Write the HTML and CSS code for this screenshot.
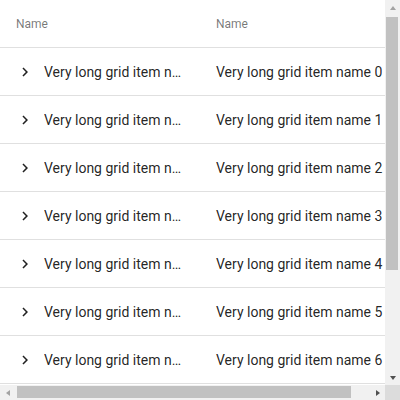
FILE: index.html
```html
<!DOCTYPE html>
<html>
<head>
<meta charset="utf-8">
<link rel="stylesheet" href="styles.css">
</head>
<body>
<div class="frame">
  <div class="viewport">
    <div class="grid">
      <div class="row header">
        <div class="cell">Name</div>
        <div class="cell">Name</div>
      </div>
      <div class="row"><div class="cell first"><svg class="chev" viewBox="0 0 24 24"><path d="M10 6L8.59 7.41 13.17 12l-4.58 4.59L10 18l6-6z"/></svg><span class="txt">Very long grid item name 0</span></div><div class="cell">Very long grid item name 0</div></div>
      <div class="row"><div class="cell first"><svg class="chev" viewBox="0 0 24 24"><path d="M10 6L8.59 7.41 13.17 12l-4.58 4.59L10 18l6-6z"/></svg><span class="txt">Very long grid item name 1</span></div><div class="cell">Very long grid item name 1</div></div>
      <div class="row"><div class="cell first"><svg class="chev" viewBox="0 0 24 24"><path d="M10 6L8.59 7.41 13.17 12l-4.58 4.59L10 18l6-6z"/></svg><span class="txt">Very long grid item name 2</span></div><div class="cell">Very long grid item name 2</div></div>
      <div class="row"><div class="cell first"><svg class="chev" viewBox="0 0 24 24"><path d="M10 6L8.59 7.41 13.17 12l-4.58 4.59L10 18l6-6z"/></svg><span class="txt">Very long grid item name 3</span></div><div class="cell">Very long grid item name 3</div></div>
      <div class="row"><div class="cell first"><svg class="chev" viewBox="0 0 24 24"><path d="M10 6L8.59 7.41 13.17 12l-4.58 4.59L10 18l6-6z"/></svg><span class="txt">Very long grid item name 4</span></div><div class="cell">Very long grid item name 4</div></div>
      <div class="row"><div class="cell first"><svg class="chev" viewBox="0 0 24 24"><path d="M10 6L8.59 7.41 13.17 12l-4.58 4.59L10 18l6-6z"/></svg><span class="txt">Very long grid item name 5</span></div><div class="cell">Very long grid item name 5</div></div>
      <div class="row"><div class="cell first"><svg class="chev" viewBox="0 0 24 24"><path d="M10 6L8.59 7.41 13.17 12l-4.58 4.59L10 18l6-6z"/></svg><span class="txt">Very long grid item name 6</span></div><div class="cell">Very long grid item name 6</div></div>
      <div class="row"><div class="cell first"><svg class="chev" viewBox="0 0 24 24"><path d="M10 6L8.59 7.41 13.17 12l-4.58 4.59L10 18l6-6z"/></svg><span class="txt">Very long grid item name 7</span></div><div class="cell">Very long grid item name 7</div></div>
    </div>
  </div>
  <div class="vbar">
    <div class="btn"><span class="tri up"></span></div>
    <div class="vtrack"><div class="vthumb"></div></div>
    <div class="btn"><span class="tri down"></span></div>
  </div>
  <div class="hbar">
    <div class="btn"><span class="tri left"></span></div>
    <div class="htrack"><div class="hthumb"></div></div>
    <div class="btn"><span class="tri right"></span></div>
  </div>
  <div class="corner"></div>
</div>
</body>
</html>
```

FILE: styles.css
```css
html, body {
  margin: 0;
  padding: 0;
  background: #fff;
}
.frame {
  width: 400px;
  height: 400px;
  display: grid;
  grid-template-columns: 385px 15px;
  grid-template-rows: 385px 15px;
}
.viewport {
  overflow: hidden;
  font-family: Roboto, "Liberation Sans", sans-serif;
  font-size: 14px;
  color: rgba(0, 0, 0, 0.87);
}
.grid {
  width: 408px;
}
.row {
  display: grid;
  grid-template-columns: 200px 208px;
  height: 48px;
  border-bottom: 1px solid #e0e0e0;
  box-sizing: border-box;
}
.cell {
  display: flex;
  align-items: center;
  padding: 0 16px;
  min-width: 0;
  white-space: nowrap;
  overflow: hidden;
}
.header .cell {
  font-size: 12px;
  font-weight: 400;
  color: rgba(0, 0, 0, 0.54);
}
.chev {
  width: 18px;
  height: 18px;
  flex: none;
  margin-right: 10px;
  fill: rgba(0, 0, 0, 0.87);
}
.txt {
  overflow: hidden;
  text-overflow: ellipsis;
  min-width: 0;
}

/* scrollbars */
.vbar, .hbar {
  background: #f1f1f1;
  display: flex;
}
.vbar {
  flex-direction: column;
}
.btn {
  width: 15px;
  height: 15px;
  flex: none;
  display: flex;
  align-items: center;
  justify-content: center;
}
.vtrack, .htrack {
  flex: 1;
  display: flex;
}
.vtrack {
  flex-direction: column;
}
.vthumb {
  margin: 2px 2px 0 1px;
  height: 253px;
  background: #c1c1c1;
}
.hthumb {
  margin: 1px 0 2px 2px;
  width: 334px;
  background: #c1c1c1;
}
.tri {
  width: 0;
  height: 0;
}
.tri.up {
  border-left: 3.5px solid transparent;
  border-right: 3.5px solid transparent;
  border-bottom: 4px solid #a3a3a3;
}
.tri.down {
  border-left: 3.5px solid transparent;
  border-right: 3.5px solid transparent;
  border-top: 4px solid #505050;
}
.tri.left {
  border-top: 3.5px solid transparent;
  border-bottom: 3.5px solid transparent;
  border-right: 4px solid #a3a3a3;
}
.tri.right {
  border-top: 3.5px solid transparent;
  border-bottom: 3.5px solid transparent;
  border-left: 4px solid #505050;
}
.corner {
  background: #dcdcdc;
}
```
